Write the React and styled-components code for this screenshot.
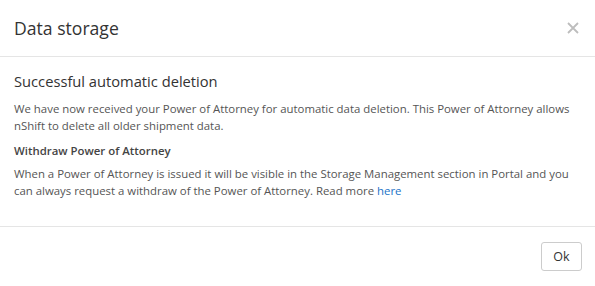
import React from "react";
import styled, { createGlobalStyle } from "styled-components";

const GlobalStyle = createGlobalStyle`
  html, body {
    margin: 0;
    padding: 0;
    background: #fff;
  }
  body {
    font-family: "Open Sans", "Noto Sans", "DejaVu Sans", sans-serif;
    font-size: 11.4px;
    color: #555;
  }
`;

const Modal = styled.div`
  width: 595px;
  height: 286px;
  background: #fff;
  display: flex;
  flex-direction: column;
`;

const Header = styled.div`
  display: flex;
  align-items: center;
  justify-content: space-between;
  padding: 15px 15px 15px 14px;
  border-bottom: 1px solid #e5e5e5;
`;

const Title = styled.h4`
  margin: 0;
  font-size: 17.6px;
  font-weight: 400;
  line-height: 26px;
  color: #333;
`;

const Close = styled.button`
  display: flex;
  align-items: center;
  justify-content: center;
  width: 14px;
  height: 14px;
  padding: 0;
  border: 0;
  background: transparent;
  cursor: pointer;
`;

const Body = styled.div`
  flex: 1;
  padding: 15px 15px 0 14px;
`;

const Heading = styled.h4`
  margin: 0 0 10px;
  font-size: 14.7px;
  font-weight: 400;
  line-height: 18px;
  color: #333;
`;

const SubHeading = styled.div`
  margin: 0 0 6px;
  font-weight: 600;
  line-height: 17px;
  color: #444;
`;

const Paragraph = styled.p`
  margin: 0 0 ${(p) => p.$gap || 10}px;
  line-height: 17px;
`;

const Link = styled.a`
  color: #1b72c7;
  text-decoration: none;
`;

const Footer = styled.div`
  display: flex;
  justify-content: flex-end;
  padding: 15px 13px 15px 15px;
  border-top: 1px solid #e5e5e5;
`;

const Button = styled.button`
  width: 41px;
  height: 29px;
  padding: 0;
  border: 1px solid #ccc;
  border-radius: 3px;
  background: #fff;
  font-family: inherit;
  font-size: 12.5px;
  color: #333;
  cursor: pointer;
`;

const CloseIcon = () => (
  <svg width="12" height="12" viewBox="0 0 12 12">
    <path d="M1 1L11 11M11 1L1 11" stroke="#bdbdbd" strokeWidth="1.8" />
  </svg>
);

export default function App() {
  return (
    <>
      <GlobalStyle />
      <Modal>
        <Header>
          <Title>Data storage</Title>
          <Close aria-label="Close">
            <CloseIcon />
          </Close>
        </Header>
        <Body>
          <Heading>Successful automatic deletion</Heading>
          <Paragraph $gap={8}>
            We have now received your Power of Attorney for automatic data
            deletion. This Power of Attorney allows nShift to delete all older
            shipment data.
          </Paragraph>
          <SubHeading>Withdraw Power of Attorney</SubHeading>
          <Paragraph>
            When a Power of Attorney is issued it will be visible in the
            Storage Management section in Portal and you can always request a
            withdraw of the Power of Attorney. Read more <Link href="#">here</Link>
          </Paragraph>
        </Body>
        <Footer>
          <Button>Ok</Button>
        </Footer>
      </Modal>
    </>
  );
}
